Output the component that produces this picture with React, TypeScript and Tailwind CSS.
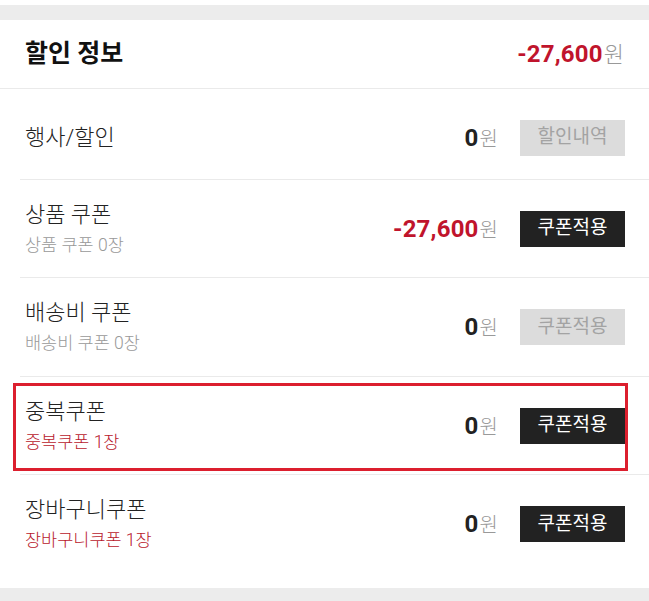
import React from "react";

interface Row {
  title: string;
  sub?: string;
  subRed?: boolean;
  amount: string;
  amountRed?: boolean;
  button: string;
  active: boolean;
  highlight?: boolean;
  height: string;
  last?: boolean;
}

const rows: Row[] = [
  { title: "행사/할인", amount: "0", button: "할인내역", active: false, height: "h-[91px] pt-[7px]" },
  { title: "상품 쿠폰", sub: "상품 쿠폰 0장", amount: "-27,600", amountRed: true, button: "쿠폰적용", active: true, height: "h-[98px]" },
  { title: "배송비 쿠폰", sub: "배송비 쿠폰 0장", amount: "0", button: "쿠폰적용", active: false, height: "h-[99px]" },
  { title: "중복쿠폰", sub: "중복쿠폰 1장", subRed: true, amount: "0", button: "쿠폰적용", active: true, highlight: true, height: "h-[98px]" },
  { title: "장바구니쿠폰", sub: "장바구니쿠폰 1장", subRed: true, amount: "0", button: "쿠폰적용", active: true, height: "h-[98px]", last: true },
];

const font = { fontFamily: 'Roboto, "Noto Sans CJK KR", sans-serif' };

function Amount({ value, red, big }: { value: string; red?: boolean; big?: boolean }) {
  return (
    <span className="flex items-baseline">
      <span className={`text-[24px] font-bold tracking-[0.2px] ${red ? "text-[#c0142c]" : "text-[#222]"}`}>{value}</span>
      <span className={`${big ? "text-[22px]" : "text-[20px]"} font-light text-[#999] ml-[1px]`}>원</span>
    </span>
  );
}

export default function App() {
  return (
    <div className="w-[649px] h-[601px] bg-white overflow-hidden" style={font}>
      <div className="h-[5px]" />
      <div className="h-[15px] bg-[#ececec]" />

      {/* 헤더 */}
      <div className="h-[69px] flex items-center justify-between pl-[25px] pr-[25px] border-b border-[#eaeaea]">
        <span className="text-[25px] font-bold text-[#111]">할인 정보</span>
        <Amount value="-27,600" red big />
      </div>

      {/* 할인 목록 */}
      <div className="ml-[20px] pb-[15px]">
        {rows.map((row) => (
          <div
            key={row.title}
            className={`relative ${row.height} flex items-center pl-[5px] pr-[24px] ${row.last ? "" : "border-b border-[#eaeaea]"}`}
          >
            {row.highlight && (
              <div className="absolute left-[-7px] right-[21px] top-[6px] bottom-[3px] border-[3px] border-[#dc1f2e]" />
            )}
            <div className="flex-1 flex flex-col">
              <span className="text-[22px] font-light text-[#222] leading-[28px]">{row.title}</span>
              {row.sub && (
                <span className={`text-[17.5px] font-light leading-[24px] mt-[4px] ${row.subRed ? "text-[#b8182c]" : "text-[#999]"}`}>
                  {row.sub}
                </span>
              )}
            </div>
            <Amount value={row.amount} red={row.amountRed} />
            <button
              type="button"
              className={`ml-[22px] w-[105px] h-[36px] text-[19px] flex items-center justify-center ${
                row.active ? "bg-[#222] text-white" : "bg-[#dcdcdc] text-[#a3a3a3]"
              }`}
            >
              {row.button}
            </button>
          </div>
        ))}
      </div>

      <div className="h-[20px] bg-[#ececec]" />
    </div>
  );
}
